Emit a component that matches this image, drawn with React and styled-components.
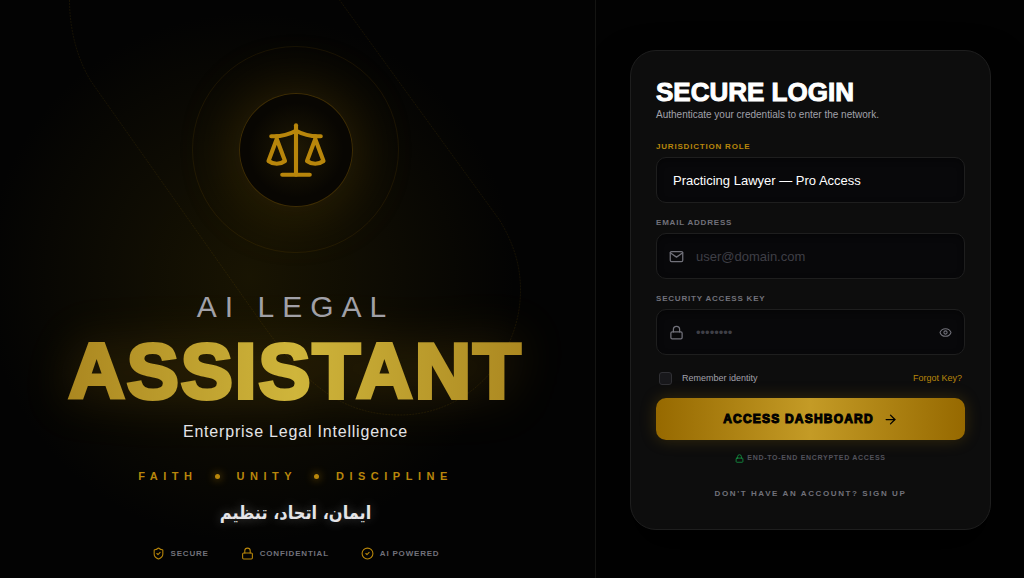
import React, { useState } from 'react'
import styled, { createGlobalStyle } from 'styled-components'
import { ArrowRight, CircleCheck, Eye, Lock, Scale, ShieldCheck } from 'lucide-react'
import { FiMail } from 'react-icons/fi'

const gold = '#b8860b'

const LoginForm = () => {
  const [showKey, setShowKey] = useState(false)

  return (
    <Card onSubmit={e => e.preventDefault()}>
      <CardTitle>SECURE LOGIN</CardTitle>
      <CardHint>Authenticate your credentials to enter the network.</CardHint>

      <Field>
        <Label htmlFor="role" $active>JURISDICTION ROLE</Label>
        <Control>
          <Select id="role" defaultValue="lawyer">
            <option value="lawyer">Practicing Lawyer — Pro Access</option>
          </Select>
        </Control>
      </Field>

      <Field>
        <Label htmlFor="email">EMAIL ADDRESS</Label>
        <Control>
          <FiMail size={15} />
          <Input id="email" type="email" placeholder="user@domain.com" />
        </Control>
      </Field>

      <Field>
        <Label htmlFor="key">SECURITY ACCESS KEY</Label>
        <Control>
          <Lock size={15} />
          <Input id="key" type={showKey ? 'text' : 'password'} placeholder="••••••••" />
          <IconButton type="button" aria-label="Show key" onClick={() => setShowKey(!showKey)}>
            <Eye size={13} />
          </IconButton>
        </Control>
      </Field>

      <Options>
        <Remember>
          <Checkbox type="checkbox" />
          Remember identity
        </Remember>
        <ForgotLink href="#forgot">Forgot Key?</ForgotLink>
      </Options>

      <SubmitButton type="submit">
        ACCESS DASHBOARD
        <ArrowRight size={15} />
      </SubmitButton>

      <Encrypted>
        <Lock size={9} />
        END-TO-END ENCRYPTED ACCESS
      </Encrypted>
      <SignUpLink href="#signup">DON'T HAVE AN ACCOUNT? SIGN UP</SignUpLink>
    </Card>
  )
}

const App = () => (
  <Page>
    <GlobalStyle />
    <Hero>
      <Orbit viewBox="0 0 596 578" preserveAspectRatio="xMidYMin slice" aria-hidden="true">
        <path d="M70 0C70 30 78 60 92 82L260 320C300 376 336 415 400 415C470 415 521 356 521 290C521 262 512 240 500 220L340 0" />
      </Orbit>
      <Ring>
        <Emblem>
          <Scale size={66} strokeWidth={1.5} />
        </Emblem>
      </Ring>
      <Title>
        <Overline>AI LEGAL</Overline>
        <Brand>ASSISTANT</Brand>
      </Title>
      <Tagline>Enterprise Legal Intelligence</Tagline>
      <Motto>
        <span>FAITH</span>
        <Dot />
        <span>UNITY</span>
        <Dot />
        <span>DISCIPLINE</span>
      </Motto>
      <UrduMotto lang="ur" dir="rtl">ایمان، اتحاد، تنظیم</UrduMotto>
      <Badges>
        <Badge><ShieldCheck size={13} />SECURE</Badge>
        <Badge><Lock size={13} />CONFIDENTIAL</Badge>
        <Badge><CircleCheck size={13} />AI POWERED</Badge>
      </Badges>
    </Hero>
    <Side>
      <LoginForm />
    </Side>
  </Page>
)

export default App

const GlobalStyle = createGlobalStyle`
  * { box-sizing: border-box; }
  body {
    margin: 0;
    background: #020202;
    color: #fff;
    font-family: Arial, "Liberation Sans", sans-serif;
  }
  input, select, button { font: inherit; }
`

const Page = styled.main`
  display: grid;
  grid-template-columns: minmax(0, 596fr) minmax(0, 428fr);
  min-height: 100vh;
`

const Hero = styled.section`
  position: relative;
  display: flex;
  flex-direction: column;
  align-items: center;
  padding: 46px 4px 16px 0;
  border-right: 1px solid #141412;
  overflow: hidden;
  background:
    radial-gradient(circle at 42% 48%, rgba(80, 64, 0, 0.28), transparent 58%),
    #030303;
`

const Orbit = styled.svg`
  position: absolute;
  inset: 0;
  width: 100%;
  height: 100%;
  fill: none;
  stroke: rgba(184, 134, 11, 0.11);
  stroke-dasharray: 2 1;
`

const Ring = styled.div`
  display: grid;
  place-items: center;
  width: 207px;
  height: 207px;
  border: 1px solid rgba(184, 134, 11, 0.1);
  border-radius: 50%;
`

const Emblem = styled.div`
  display: grid;
  place-items: center;
  width: 114px;
  height: 114px;
  border: 1px solid rgba(184, 134, 11, 0.3);
  border-radius: 50%;
  background: radial-gradient(circle, #1e1804, #080602 60%);
  box-shadow: 0 0 64px rgba(184, 134, 11, 0.24);
  color: ${gold};
`

const Title = styled.h1`
  position: relative;
  display: flex;
  flex-direction: column;
  align-items: center;
  margin: 36px 0 0;
`

const Overline = styled.span`
  color: #a1a1aa;
  font-size: 30px;
  font-weight: 400;
  line-height: 36px;
  letter-spacing: 8px;
`

const Brand = styled.span`
  background: linear-gradient(90deg, #ab8720, #cfb53b 50%, #ab8720);
  background-clip: text;
  color: transparent;
  -webkit-text-stroke: 4px transparent;
  filter: drop-shadow(0 0 24px rgba(184, 134, 11, 0.24));
  padding: 0 3px;
  font-size: 78px;
  font-weight: 900;
  line-height: 92px;
  letter-spacing: 2px;
`

const Tagline = styled.p`
  position: relative;
  margin: 5px 0 0;
  color: #e4e4e7;
  font-size: 16px;
  line-height: 20px;
  letter-spacing: 0.05em;
`

const Motto = styled.div`
  display: flex;
  align-items: center;
  gap: 17px;
  margin-top: 26px;
  color: ${gold};
  font-size: 11px;
  font-weight: 700;
  line-height: 16px;
  letter-spacing: 0.5em;
`

const Dot = styled.i`
  width: 5px;
  height: 5px;
  border-radius: 50%;
  background: ${gold};
  box-shadow: 0 0 8px ${gold};
`

const UrduMotto = styled.p`
  margin: 13px 0 0;
  color: #e4e4e7;
  font-family: "DejaVu Sans Condensed", "DejaVu Sans", sans-serif;
  font-size: 18px;
  font-weight: 700;
  line-height: 32px;
  text-shadow: 0 0 12px rgba(255, 255, 255, 0.3);
`

const Badges = styled.div`
  display: flex;
  gap: 32px;
  margin-top: 18px;
`

const Badge = styled.span`
  display: flex;
  align-items: center;
  gap: 6px;
  color: #71717a;
  font-size: 8px;
  font-weight: 700;
  line-height: 12px;
  letter-spacing: 0.1em;

  svg { color: ${gold}; }
`

const Side = styled.section`
  display: flex;
  flex-direction: column;
  justify-content: center;
  padding: 50px 33px 48px 34px;
`

const Card = styled.form`
  display: flex;
  flex-direction: column;
  padding: 26px 25px;
  border: 1px solid #1e1e1e;
  border-radius: 26px;
  background: #0d0d0d;
  box-shadow: 0 20px 40px #000;
`

const CardTitle = styled.h2`
  margin: 0;
  font-size: 26px;
  font-weight: 900;
  line-height: 30px;
  -webkit-text-stroke: 1px #fff;
`

const CardHint = styled.p`
  margin: 0 0 18px;
  color: #a1a1aa;
  font-size: 10px;
  line-height: 16px;
`

const Field = styled.div`
  margin-bottom: 14px;
`

const Label = styled.label`
  display: block;
  margin-bottom: 4px;
  color: ${({ $active }) => ($active ? gold : '#71717a')};
  font-size: 8px;
  font-weight: 700;
  line-height: 12px;
  letter-spacing: 0.1em;
`

const Control = styled.div`
  display: flex;
  align-items: center;
  gap: 12px;
  height: 46px;
  padding: 0 12px;
  border: 1px solid #1e1e1e;
  border-radius: 10px;
  background: #08080a;
  box-shadow: inset 0 2px 6px rgba(0, 0, 0, 0.4);
  color: #71717a;
`

const Select = styled.select`
  flex: 1;
  min-width: 0;
  padding: 0 4px;
  border: 0;
  outline: 0;
  appearance: none;
  background: transparent;
  color: #fff;
  font-size: 13px;
`

const Input = styled.input`
  flex: 1;
  min-width: 0;
  padding: 0;
  border: 0;
  outline: 0;
  background: transparent;
  color: #fff;
  font-size: 13px;

  &::placeholder { color: #3f3f46; }
`

const IconButton = styled.button`
  display: flex;
  padding: 0;
  border: 0;
  background: none;
  color: #71717a;
  cursor: pointer;
`

const Options = styled.div`
  display: flex;
  justify-content: space-between;
  align-items: center;
  padding: 0 3px;
  margin-top: 2px;
  font-size: 9px;
  line-height: 14px;
`

const Remember = styled.label`
  display: flex;
  align-items: center;
  gap: 10px;
  color: #a1a1aa;
`

const Checkbox = styled.input`
  appearance: none;
  width: 13px;
  height: 13px;
  margin: 0;
  border: 1px solid #303034;
  border-radius: 3px;
  background: #18181b;

  &:checked { background: ${gold}; }
`

const ForgotLink = styled.a`
  color: ${gold};
  text-decoration: none;
`

const SubmitButton = styled.button`
  display: flex;
  justify-content: center;
  align-items: center;
  gap: 9px;
  height: 42px;
  margin-top: 13px;
  border: 0;
  border-radius: 10px;
  background: linear-gradient(90deg, #966900, #c49b26 50%, #966900);
  box-shadow: 0 0 16px rgba(184, 134, 11, 0.25);
  color: #000;
  font-size: 12px;
  font-weight: 900;
  letter-spacing: 0.1em;
  -webkit-text-stroke: 1px #000;
  cursor: pointer;
`

const Encrypted = styled.p`
  display: flex;
  justify-content: center;
  align-items: center;
  gap: 3px;
  margin: 12px 0 0;
  color: #52525b;
  font-size: 7px;
  font-weight: 700;
  line-height: 12px;
  letter-spacing: 0.1em;

  svg { color: #16a34a; }
`

const SignUpLink = styled.a`
  align-self: center;
  margin: 24px 0 3px;
  color: #71717a;
  font-size: 8px;
  font-weight: 700;
  line-height: 12px;
  letter-spacing: 0.2em;
  text-decoration: none;
`
